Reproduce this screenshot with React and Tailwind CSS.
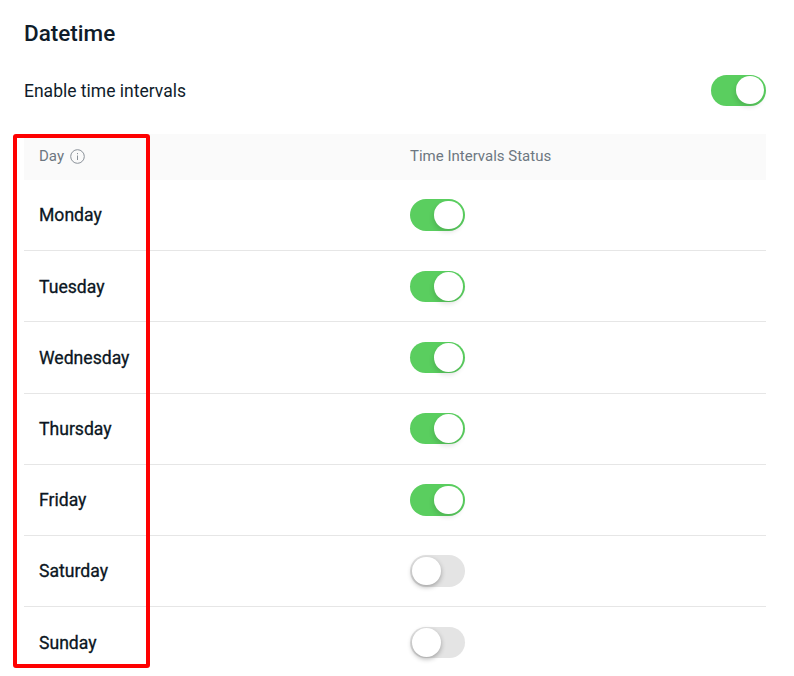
import React from "react";

const days = [
  ["Monday", true],
  ["Tuesday", true],
  ["Wednesday", true],
  ["Thursday", true],
  ["Friday", true],
  ["Saturday", false],
  ["Sunday", false],
];

function Toggle({ on, size = "h-[31.5px]" }) {
  return (
    <div
      className={`relative w-[55px] ${size} rounded-full ${on ? "bg-[#5ace5f]" : "bg-[#e4e4e4]"}`}
    >
      <div
        className={`absolute top-[1.5px] bottom-[1.5px] aspect-square rounded-full bg-white ${
          on
            ? "right-[2.5px] shadow-[-1px_3px_5px_rgba(0,0,0,0.12)]"
            : "left-[2px] shadow-[0_2px_5px_rgba(0,0,0,0.3)]"
        }`}
      />
    </div>
  );
}

export default function App() {
  return (
    <div className="relative h-[676px] w-[794px] overflow-hidden bg-white pl-[24px] pr-[28px] font-['Roboto',sans-serif] text-[#0f1c2a]">
      <h1 className="pt-[19px] text-[22.5px] leading-[28px] font-medium">Datetime</h1>
      <div className="mt-[13px] flex h-[60px] items-center justify-between">
        <span className="pt-[2px] text-[17.5px]">Enable time intervals</span>
        <Toggle on size="h-[31px]" />
      </div>
      <div className="mt-[14px] grid h-[46px] grid-cols-2 items-center bg-[#fafafa] pb-[2px] text-[15px] text-[#6d7781]">
        <div className="flex items-center gap-[6px] pl-[15px]">
          Day
          <svg width="15" height="15" viewBox="0 0 15 15" fill="none" stroke="#8a9199" strokeWidth="1">
            <circle cx="7.5" cy="7.5" r="6.8" />
            <path d="M7.5 6.5v4.5M7.5 4v1.2" />
          </svg>
        </div>
        <div className="pl-[15px]">Time Intervals Status</div>
      </div>
      {days.map(([day, on], i) => (
        <div
          key={day}
          className={`grid h-[71.2px] grid-cols-2 items-center ${i < 6 ? "border-b border-[#e6e6e6]" : ""}`}
        >
          <div className="pt-[1px] pl-[15px] text-[17.6px] text-[#0b1622] [-webkit-text-stroke:0.3px_#0b1622]">{day}</div>
          <div className="pl-[15px]">
            <Toggle on={on} />
          </div>
        </div>
      ))}
      <div className="absolute top-[134px] left-[13px] h-[534px] w-[137px] rounded-[3px] border-[4px] border-[#fe0000]" />
    </div>
  );
}
